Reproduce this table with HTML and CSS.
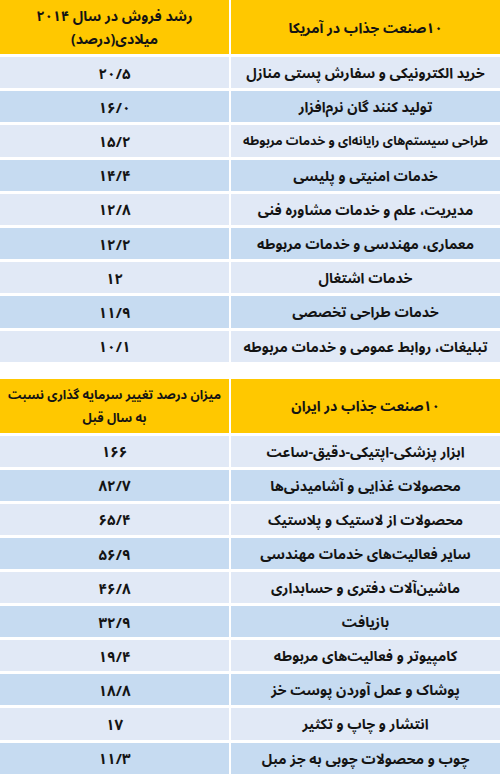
FILE: index.html
```html
<!DOCTYPE html>
<html lang="fa">
<head>
<meta charset="utf-8">
<link rel="stylesheet" href="styles.css">
</head>
<body>
<div class="page">
  <div class="table t1">
    <div class="cell head name"><span class="txt">۱۰صنعت جذاب در آمریکا</span></div>
    <div class="cell head val-head"><span class="txt two">رشد فروش در سال ۲۰۱۴<br>میلادی(درصد)</span></div>

    <div class="cell light name"><span class="txt">خرید الکترونیکی و سفارش پستی منازل</span></div>
    <div class="cell light val"><span class="num">۲۰/۵</span></div>
    <div class="cell dark name"><span class="txt">تولید کنند گان نرم‌افزار</span></div>
    <div class="cell dark val"><span class="num">۱۶/۰</span></div>
    <div class="cell light name"><span class="txt tight">طراحی سیستم‌های رایانه‌ای و خدمات مربوطه</span></div>
    <div class="cell light val"><span class="num">۱۵/۲</span></div>
    <div class="cell dark name"><span class="txt">خدمات امنیتی و پلیسی</span></div>
    <div class="cell dark val"><span class="num">۱۴/۴</span></div>
    <div class="cell light name"><span class="txt">مدیریت، علم و خدمات مشاوره فنی</span></div>
    <div class="cell light val"><span class="num">۱۲/۸</span></div>
    <div class="cell dark name"><span class="txt">معماری، مهندسی و خدمات مربوطه</span></div>
    <div class="cell dark val"><span class="num">۱۲/۲</span></div>
    <div class="cell light name"><span class="txt">خدمات اشتغال</span></div>
    <div class="cell light val"><span class="num">۱۲</span></div>
    <div class="cell dark name"><span class="txt">خدمات طراحی تخصصی</span></div>
    <div class="cell dark val"><span class="num">۱۱/۹</span></div>
    <div class="cell light name"><span class="txt">تبلیغات، روابط عمومی و خدمات مربوطه</span></div>
    <div class="cell light val"><span class="num">۱۰/۱</span></div>
  </div>

  <div class="table t2">
    <div class="cell head name"><span class="txt">۱۰صنعت جذاب در ایران</span></div>
    <div class="cell head val-head"><span class="txt two tight">میزان درصد تغییر سرمایه گذاری نسبت<br>به سال قبل</span></div>

    <div class="cell light name"><span class="txt">ابزار پزشکی-اپتیکی-دقیق-ساعت</span></div>
    <div class="cell light val"><span class="num">۱۶۶</span></div>
    <div class="cell dark name"><span class="txt">محصولات غذایی و آشامیدنی‌ها</span></div>
    <div class="cell dark val"><span class="num">۸۲/۷</span></div>
    <div class="cell light name"><span class="txt">محصولات از لاستیک و پلاستیک</span></div>
    <div class="cell light val"><span class="num">۶۵/۴</span></div>
    <div class="cell dark name"><span class="txt">سایر فعالیت‌های خدمات مهندسی</span></div>
    <div class="cell dark val"><span class="num">۵۶/۹</span></div>
    <div class="cell light name"><span class="txt">ماشین‌آلات دفتری و حسابداری</span></div>
    <div class="cell light val"><span class="num">۴۶/۸</span></div>
    <div class="cell dark name"><span class="txt">بازیافت</span></div>
    <div class="cell dark val"><span class="num">۳۲/۹</span></div>
    <div class="cell light name"><span class="txt">کامپیوتر و فعالیت‌های مربوطه</span></div>
    <div class="cell light val"><span class="num">۱۹/۴</span></div>
    <div class="cell dark name"><span class="txt">پوشاک و عمل آوردن پوست خز</span></div>
    <div class="cell dark val"><span class="num">۱۸/۸</span></div>
    <div class="cell light name"><span class="txt">انتشار و چاپ و تکثیر</span></div>
    <div class="cell light val"><span class="num">۱۷</span></div>
    <div class="cell dark name"><span class="txt">چوب و محصولات چوبی به جز مبل</span></div>
    <div class="cell dark val"><span class="num">۱۱/۳</span></div>
  </div>
</div>
</body>
</html>
```

FILE: styles.css
```css
html, body {
  margin: 0;
  padding: 0;
  background: #ffffff;
}

.page {
  width: 500px;
  height: 775px;
  overflow: hidden;
  display: flex;
  flex-direction: column;
  gap: 17px;
  font-family: "Noto Sans Arabic", "Noto Naskh Arabic", "Vazirmatn", "DejaVu Sans", sans-serif;
  font-weight: bold;
  color: #141414;
}

.table {
  display: grid;
  direction: rtl;
  grid-template-columns: 269px 229px;
  column-gap: 2px;
  row-gap: 3px;
}

.t1 {
  grid-template-rows: 54px repeat(9, 31.2px);
}

.t2 {
  grid-template-rows: 54px repeat(10, 31.1px);
}

.cell {
  display: flex;
  align-items: center;
  justify-content: center;
  text-align: center;
  padding-top: 2px;
  box-sizing: border-box;
  overflow: hidden;
}

.txt {
  display: inline-block;
  white-space: nowrap;
  font-size: 14.2px;
  line-height: 21px;
}

.txt.two {
  line-height: 23px;
}

.txt.tight {
  font-size: 12.6px;
}

.head {
  background: #ffc800;
}

.light {
  background: #e1e9f6;
}

.dark {
  background: #c6dbf1;
}

.num {
  direction: ltr;
  unicode-bidi: isolate;
  font-size: 15px;
}
```
